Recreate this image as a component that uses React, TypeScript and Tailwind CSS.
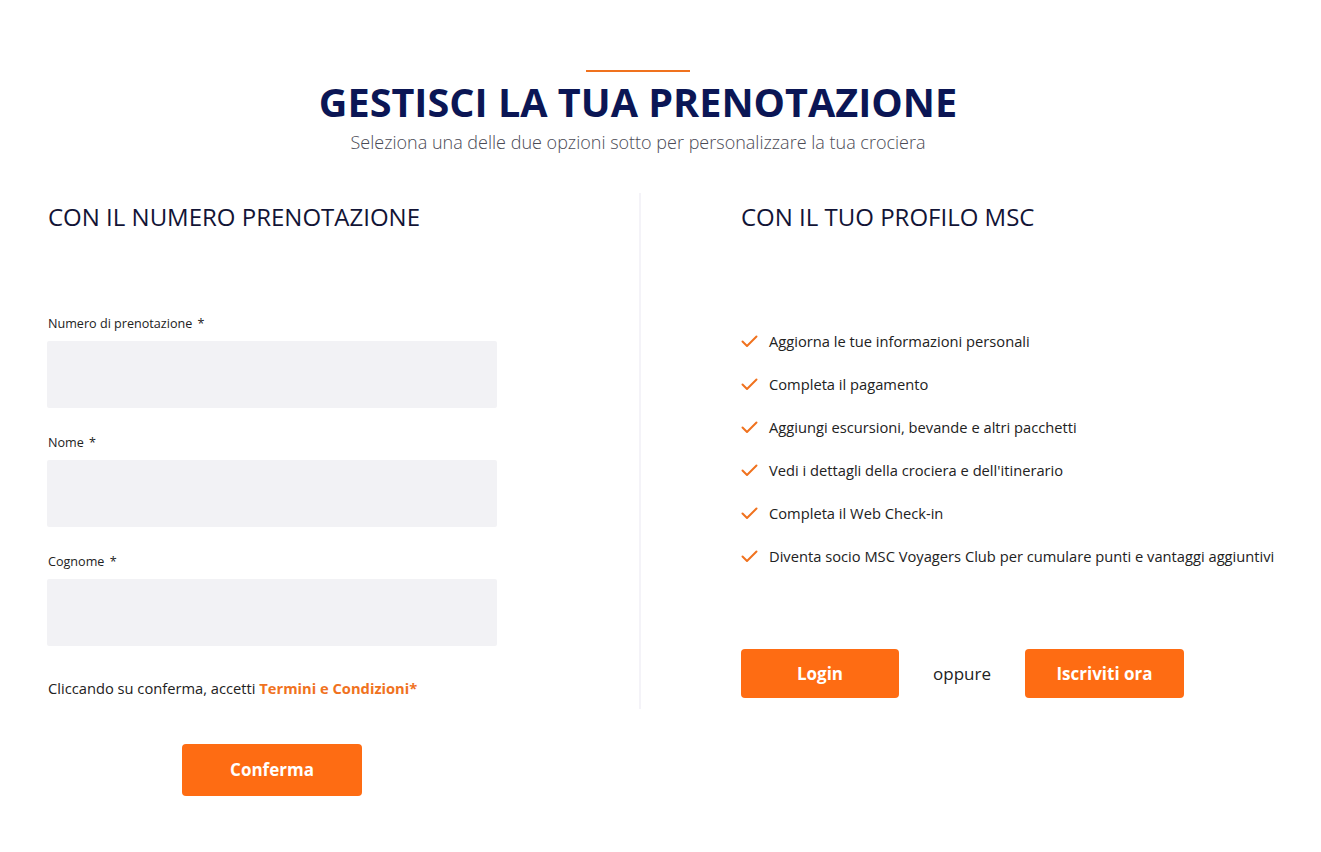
const fields = ["Numero di prenotazione", "Nome", "Cognome"];

const vantaggi = [
  "Aggiorna le tue informazioni personali",
  "Completa il pagamento",
  "Aggiungi escursioni, bevande e altri pacchetti",
  "Vedi i dettagli della crociera e dell'itinerario",
  "Completa il Web Check-in",
  "Diventa socio MSC Voyagers Club per cumulare punti e vantaggi aggiuntivi",
];

const Check = () => (
  <svg width="17" height="13" viewBox="0 0 17 13" className="shrink-0">
    <polyline
      points="1.5,6.5 6,11 15.5,1.5"
      fill="none"
      stroke="#f0721e"
      strokeWidth="2"
      strokeLinecap="round"
      strokeLinejoin="round"
    />
  </svg>
);

export default function App() {
  return (
    <div className="w-full min-h-[852px] bg-white text-[#1b1b2f] font-['Open_Sans',sans-serif]">
      <div className="w-[1276px] flex flex-col items-center pt-[70px]">
        <div className="w-[104px] h-[2px] bg-[#f0721e]" />
        <h1 className="mt-[4px] text-[39.6px] leading-[52px] font-bold text-[#0b1655]">
          GESTISCI LA TUA PRENOTAZIONE
        </h1>
        <p className="mt-[2px] text-[18px] leading-[24px] font-light text-[#4a4a55]">
          Seleziona una delle due opzioni sotto per personalizzare la tua crociera
        </p>
      </div>

      <div className="flex mt-[39px]">
        {/* numero prenotazione */}
        <div className="w-[639px] pl-[48px] pt-[8px] pb-[56px] flex flex-col">
          <h2 className="text-[24px] leading-[32px] text-[#121436]">
            CON IL NUMERO PRENOTAZIONE
          </h2>
          <div className="mt-[82px] w-[450px] flex flex-col">
            {fields.map((f, i) => (
              <div key={f} className={i > 0 ? "mt-[26px]" : ""}>
                <label className="block text-[12.6px] leading-[18px] text-[#222]">
                  {f} <span className="ml-[2px]">*</span>
                </label>
                <input
                  type="text"
                  className="mt-[8px] ml-[-1px] block w-[450px] h-[67px] bg-[#f2f2f5] rounded-[2px] outline-none px-4"
                />
              </div>
            ))}
            <p className="mt-[31px] text-[14.7px] leading-[22px] text-[#222]">
              Cliccando su conferma, accetti{" "}
              <a className="font-bold text-[#f0721e]">Termini e Condizioni*</a>
            </p>
            <button className="mt-[45px] self-center ml-[-2px] w-[180px] h-[52px] rounded-[4px] bg-[#fe6c13] text-white text-[17px] font-bold">
              Conferma
            </button>
          </div>
        </div>

        <div className="w-[2px] h-[516px] bg-[#f4f3f8]" />

        {/* profilo msc */}
        <div className="flex-1 pl-[100px] pt-[8px]">
          <h2 className="text-[24px] leading-[32px] text-[#121436]">
            CON IL TUO PROFILO MSC
          </h2>
          <ul className="mt-[97px] flex flex-col gap-[21px]">
            {vantaggi.map((v) => (
              <li key={v} className="flex items-center gap-[11px] text-[14.7px] leading-[22px] text-[#222]">
                <Check />
                {v}
              </li>
            ))}
          </ul>
          <div className="mt-[82px] flex items-center">
            <button className="w-[158px] h-[49px] rounded-[4px] bg-[#fe6c13] text-white text-[17px] font-bold">
              Login
            </button>
            <span className="w-[126px] text-center text-[17px] text-[#222]">oppure</span>
            <button className="w-[159px] h-[49px] rounded-[4px] bg-[#fe6c13] text-white text-[17px] font-bold">
              Iscriviti ora
            </button>
          </div>
        </div>
      </div>
    </div>
  );
}
